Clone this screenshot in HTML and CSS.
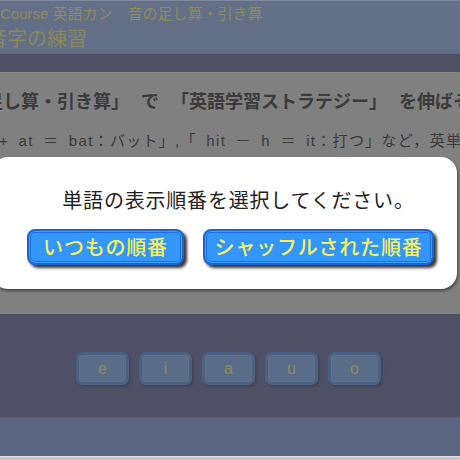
FILE: index.html
```html
<!DOCTYPE html>
<html lang="ja">
<head>
<meta charset="utf-8">
<link rel="stylesheet" href="styles.css">
</head>
<body>
<div class="page">
  <header class="head">
    <div class="crumb">Course 英語カン　音の足し算・引き算</div>
    <div class="title">音字の練習</div>
  </header>
  <div class="band"></div>
  <section class="content">
    <p class="lead">足し算・引き算」 で 「英語学習ストラテジー」 を伸ばそう</p>
    <p class="sub">+ at ＝ bat：バット」,「 hit － h ＝ it：打つ」など，英単語</p>
  </section>
  <section class="keys">
    <div class="key">e</div>
    <div class="key">i</div>
    <div class="key">a</div>
    <div class="key">u</div>
    <div class="key">o</div>
  </section>
  <div class="foot"></div>
  <div class="edge"></div>

  <div class="modal">
    <div class="msg">単語の表示順番を選択してください。</div>
    <div class="btns">
      <button class="btn b1">いつもの順番</button>
      <button class="btn b2">シャッフルされた順番</button>
    </div>
  </div>
</div>
</body>
</html>
```
FILE: styles.css
```css
html, body {
  margin: 0;
  padding: 0;
}
body {
  width: 460px;
  height: 460px;
  overflow: hidden;
  background: #808080;
  font-family: "Liberation Sans", "Noto Sans CJK JP", sans-serif;
}
.page {
  position: relative;
  width: 460px;
  height: 460px;
  overflow: hidden;
  display: flex;
  flex-direction: column;
}
.head {
  height: 52px;
  background: #646f88;
  border-top: 1px solid #7c869c;
  color: #8d8a5c;
  display: flex;
  flex-direction: column;
}
.crumb {
  font-size: 15px;
  line-height: 18px;
  margin-top: 4px;
  margin-left: 0;
  white-space: nowrap;
}
.title {
  font-size: 20px;
  line-height: 26px;
  margin-top: 2px;
  margin-left: -13px;
  font-family: "Noto Sans CJK JP", sans-serif;
  color: #8a875a;
  white-space: nowrap;
}
.band {
  height: 19px;
  background: #4f5066;
  border-top: 1px solid #5e6a84;
  box-sizing: border-box;
}
.content {
  height: 242px;
  background: #808080;
  border-top: 1px solid #8a8a8a;
  box-sizing: border-box;
  color: #3b3b3b;
}
.lead {
  margin: 18px 0 0 -15px;
  font-size: 18px;
  line-height: 22px;
  white-space: nowrap;
  font-weight: bold;
  letter-spacing: 0;
  word-spacing: 7px;
}
.sub {
  margin: 18px 0 0 -1px;
  font-size: 15px;
  line-height: 20px;
  white-space: nowrap;
  letter-spacing: 1.3px;
  word-spacing: 4px;
}
.keys {
  height: 103px;
  background: #4f5066;
  display: flex;
  justify-content: center;
  align-items: center;
  gap: 10px;
  padding: 6px 3px 0 0;
  box-sizing: border-box;
}
.key {
  width: 49px;
  height: 29px;
  border: 2px solid #4d6283;
  border-radius: 7px;
  background: #5a6d88;
  box-shadow: inset 0 0 0 1px #4a5f80, inset 0 0 0 2px #5d7290, 2px 2px 2px #454657;
  color: #8c8a5c;
  font-size: 16px;
  display: flex;
  align-items: center;
  justify-content: center;
}
.foot {
  height: 39px;
  background: #5b6681;
  border-top: 1px solid #56607a;
  box-sizing: border-box;
}
.edge {
  height: 4px;
  background: #c8c8c8;
  border-top: 1px solid #e0e0e0;
  box-sizing: border-box;
}
.modal {
  position: absolute;
  left: -8px;
  top: 157px;
  width: 465px;
  height: 132px;
  background: #ffffff;
  border-radius: 16px;
  box-shadow: 1px 2px 3px rgba(0,0,0,0.45);
  display: flex;
  flex-direction: column;
  align-items: center;
  box-sizing: border-box;
  padding-left: 12px;
}
.msg {
  margin-top: 30px;
  margin-left: 16px;
  font-family: "Noto Sans CJK JP", sans-serif;
  font-size: 20px;
  line-height: 26px;
  color: #222222;
  letter-spacing: 0.8px;
}
.btns {
  margin-top: 16px;
  display: flex;
  gap: 19px;
}
.btn {
  height: 36px;
  padding: 0;
  border: 2px solid #1b66d0;
  border-radius: 8px;
  background: #3396fa;
  box-shadow: inset 0 0 0 1px #3aa0ff, inset 0 0 0 2px #1e72dc, 3px 3px 3px #3a3a3a;
  color: #f8f25a;
  font-family: "Noto Sans CJK JP", sans-serif;
  font-weight: 500;
  font-size: 20px;
  line-height: 30px;
  letter-spacing: 0.8px;
  display: flex;
  align-items: center;
  justify-content: center;
}
.b1 { width: 157px; }
.b2 { width: 231px; }
```
